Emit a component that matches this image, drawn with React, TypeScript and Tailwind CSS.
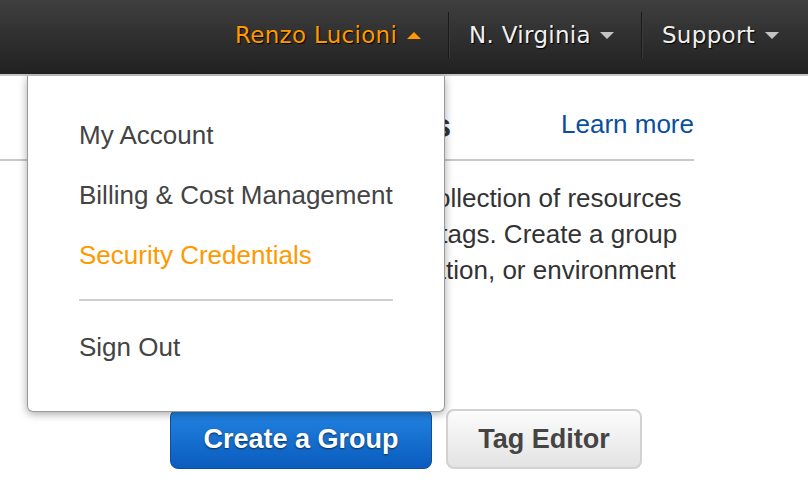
import React from "react";

function CaretUp({ color }: { color: string }) {
  return (
    <svg width="14" height="7" viewBox="0 0 14 7" className="block">
      <polygon points="7,0 14,7 0,7" fill={color} />
    </svg>
  );
}

function CaretDown({ color }: { color: string }) {
  return (
    <svg width="14" height="7" viewBox="0 0 14 7" className="block">
      <polygon points="0,0 14,0 7,7" fill={color} />
    </svg>
  );
}

function Sep() {
  return <div className="h-[46px] w-[2px] border-r border-[#3a3a3a] bg-[#1a1a1a]" />;
}

export default function App() {
  return (
    <div className="relative h-[498px] w-[808px] overflow-hidden bg-white font-['Liberation_Sans',Arial,sans-serif]">
      <header className="flex h-[76px] items-center justify-end border-b-2 border-[#c6c6c6] bg-linear-to-b from-[#3f3f3f] to-[#212121] pb-[4px] pr-[29px] font-['DejaVu_Sans',Verdana,sans-serif] text-[23px] tracking-[0.3px] [text-shadow:1px_1px_1px_#000]">
        <div className="flex items-center gap-[10px] pr-[27px] text-[#ff9900]">
          <span>Renzo Lucioni</span>
          <CaretUp color="#ff9900" />
        </div>
        <Sep />
        <div className="flex items-center gap-[9px] pl-[19px] pr-[27px] text-[#f0f0f0]">
          <span>N. Virginia</span>
          <CaretDown color="#c4c4c4" />
        </div>
        <Sep />
        <div className="flex items-center gap-[10px] pl-[19px] text-[#f0f0f0]">
          <span>Support</span>
          <CaretDown color="#c4c4c4" />
        </div>
      </header>

      <main>
        <div className="flex h-[85px] w-[694px] items-start justify-between border-b-2 border-[#c8c8c8] pl-[170px] pt-[33px]">
          <h1 className="text-[33.5px] font-bold leading-none text-[#333]">Resource Groups</h1>
          <a className="mt-[2px] text-[26px] leading-none text-[#0a4f9e]">Learn more</a>
        </div>
        <div className="ml-[170px] mt-[19px] whitespace-nowrap text-[26px] leading-[36px] text-[#333]">
          <div>A resource group is a collection of resources</div>
          <div>that share one or more tags. Create a group</div>
          <div>for each project, application, or environment</div>
        </div>
        <div className="ml-[170px] mt-[121px] flex gap-[14px]">
          <button className="h-[60px] w-[262px] rounded-[8px] border border-[#0b4f9e] bg-linear-to-b from-[#2384e3] to-[#0a5cbd] text-[27px] font-bold text-white [text-shadow:0_1px_2px_rgba(0,0,0,0.6)]">
            Create a Group
          </button>
          <button className="h-[60px] w-[196px] rounded-[8px] border-2 border-[#d2d2d2] bg-linear-to-b from-[#fcfcfc] to-[#e3e3e3] text-[27px] font-bold text-[#444]">
            Tag Editor
          </button>
        </div>
      </main>

      <div className="absolute left-[27px] top-[76px] h-[336px] w-[418px] rounded-b-[6px] border border-t-0 border-[#9a9a9a] bg-white px-[51px] pt-[29px] text-[26px] text-[#444] shadow-[0_2px_8px_rgba(0,0,0,0.35)]">
        <div className="h-[60px] leading-[60px]">My Account</div>
        <div className="h-[60px] leading-[60px]">Billing &amp; Cost Management</div>
        <div className="h-[60px] leading-[60px] text-[#ff9900]">Security Credentials</div>
        <div className="mt-[14px] h-[2px] bg-[#cfcfcf]" />
        <div className="mt-[16px] h-[60px] leading-[60px]">Sign Out</div>
      </div>
    </div>
  );
}
